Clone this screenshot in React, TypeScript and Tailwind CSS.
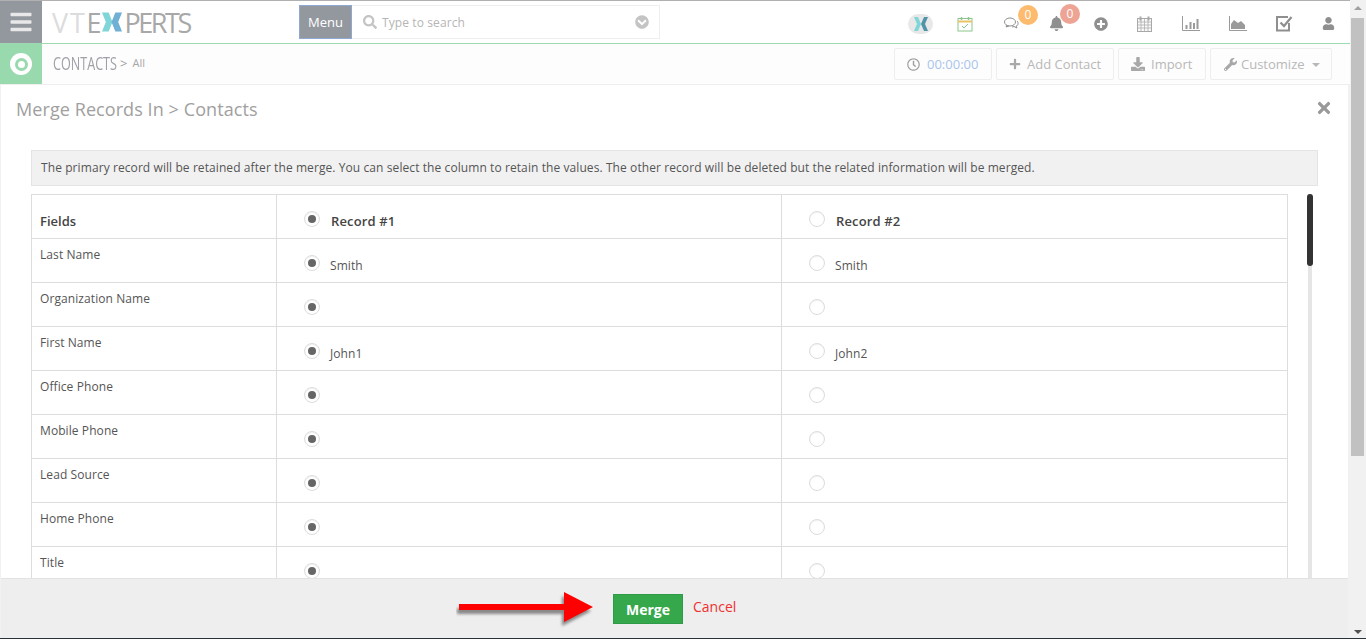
import React from 'react'
import {
  FaBars, FaTimes, FaPlus, FaWrench, FaBell, FaPlusCircle, FaUser, FaChevronCircleDown, FaSearch, FaDownload, FaRegClock,
} from 'react-icons/fa'

const rows = [
  { label: 'Last Name', a: 'Smith', b: 'Smith' },
  { label: 'Organization Name' },
  { label: 'First Name', a: 'John1', b: 'John2' },
  { label: 'Office Phone' },
  { label: 'Mobile Phone' },
  { label: 'Lead Source' },
  { label: 'Home Phone' },
  { label: 'Title' },
]

function Radio({ on }: { on?: boolean }) {
  return (
    <span className="flex h-[16px] w-[16px] shrink-0 items-center justify-center rounded-full border border-[#dcdcdc] bg-white shadow-[inset_0_1px_1px_rgba(0,0,0,0.06)]">
      {on && <span className="h-[8px] w-[8px] rounded-full bg-[#666666]" />}
    </span>
  )
}

function Cell({ on, text, bold, last }: { on?: boolean; text?: string; bold?: boolean; last?: boolean }) {
  return (
    <div className={`flex h-full pl-[27px] ${last ? 'w-[505px]' : 'w-[505px] border-r border-[#dddddd]'}`}>
      <div className={`flex items-start pt-[16px] ${bold ? 'gap-[11px]' : 'gap-[10px]'}`}>
        <Radio on={on} />
        {text && (
          <span className={`mt-[2px] leading-[17px] ${bold ? 'text-[13px] font-semibold tracking-[0.15px] text-[#444444]' : 'text-[12px] tracking-[0.085px] text-[#555555]'}`}>
            {text}
          </span>
        )}
      </div>
    </div>
  )
}

function NavBadge({ color, right }: { color: string; right: string }) {
  return (
    <span className={`absolute -top-[12px] flex h-[20px] w-[20px] items-center justify-center rounded-full text-[12px] text-white ${color} ${right}`}>
      0
    </span>
  )
}

function Logo() {
  return (
    <div className="flex items-center pl-[10px] font-['Open_Sans',sans-serif] text-[27px] leading-none">
      <span className="tracking-[1.8px] text-[#dcdcdc]">VT</span>
      <span className="tracking-[1.8px] text-[#a8a8a8]">E</span>
      <svg width="22" height="20" viewBox="0 0 21 20" className="ml-[-1px] mr-[2px]">
        <path d="M0 0h7l4 10-4 10H0l4-10z" fill="#7fd5d8" />
        <path d="M21 0h-7l-4 10 4 10h7l-4-10z" fill="#6fb0d4" />
      </svg>
      <span className="tracking-[-2.4px] text-[#a8a8a8]">PERTS</span>
    </div>
  )
}

function TopIcons() {
  return (
    <div className="ml-auto flex items-center pt-[3px] text-[#8f8f8f]">
      <span className="flex h-[20px] w-[25px] items-center justify-center rounded-full bg-[#e8e8e8]">
        <svg width="14" height="14" viewBox="0 0 14 14">
          <path d="M0 0h4l3 7-3 7H0l3-7z" fill="#7fd5d8" />
          <path d="M14 0h-4L7 7l3 7h4l-3-7z" fill="#4f94a8" />
        </svg>
      </span>
      {/* calendar check */}
      <svg width="16" height="16" viewBox="0 0 16 16" className="ml-[24px]" fill="none">
        <rect x="1" y="2.5" width="14" height="12.5" stroke="#8cc68c" />
        <path d="M1 5.5h14" stroke="#e8c468" strokeWidth="2" />
        <path d="M4.5 1v3M11.5 1v3" stroke="#8cc68c" strokeWidth="1.5" />
        <path d="M5 10l2 2 4-4" stroke="#8cc68c" />
      </svg>
      {/* chat */}
      <span className="relative ml-[31px] flex">
        <svg width="15" height="13" viewBox="0 0 15 13" fill="none">
          <ellipse cx="6" cy="5" rx="5.5" ry="4" stroke="#8f8f8f" />
          <path d="M3 8l-1 2 3-1M13 4c2 2 1 5-1 5l1 2-3-1.500-2 .5" stroke="#8f8f8f" />
        </svg>
        <NavBadge color="bg-[#fdbb6f]" right="-right-[19px]" />
      </span>
      <span className="relative ml-[30px] flex">
        <FaBell className="h-[15px] w-[15px]" />
        <NavBadge color="bg-[#eea494]" right="-right-[16px]" />
      </span>
      <FaPlusCircle className="ml-[30px] h-[14px] w-[14px]" />
      {/* calendar */}
      <svg width="15" height="16" viewBox="0 0 15 16" className="ml-[29px]" fill="none" stroke="#a8a8a8">
        <rect x="0.5" y="2.500" width="14" height="13" fill="#f8f8f8" />
        <path d="M0.500 6h14M0.500 9h14M0.500 12h14M4 3v13M7.500 3v13M11 3v13" strokeWidth="0.7" />
        <path d="M3.500 0.500v4M11.500 0.500v4" strokeWidth="2" />
      </svg>
      {/* bar chart */}
      <svg width="18" height="15" viewBox="0 0 18 15" className="ml-[30px]" fill="none" stroke="#9a9a9a">
        <path d="M0.500 0v14.500H18" />
        <path d="M4.500 13V9M8.500 13V6M12 13V7M15.500 13V3" strokeWidth="2" />
      </svg>
      {/* area chart */}
      <svg width="18" height="15" viewBox="0 0 18 15" className="ml-[29px]">
        <path d="M0.500 0v14.500H18" fill="none" stroke="#9a9a9a" />
        <path d="M2 13V8l3-4 4 3 3-2 4 4v4z" fill="#9a9a9a" />
      </svg>
      {/* checkbox */}
      <svg width="17" height="17" viewBox="0 0 17 17" className="ml-[29px]" fill="none" stroke="#8f8f8f">
        <path d="M13 8v7.500H1V2h11" strokeWidth="2" />
        <path d="M4.500 7.500l3.500 3.500 7.500-9" strokeWidth="2.200" />
      </svg>
      <FaUser className="ml-[29px] mr-[15px] h-[13px] w-[13px]" />
    </div>
  )
}

export default function App() {
  return (
    <div className="flex h-[639px] w-[1366px] flex-col overflow-hidden bg-[#f1f1f1] font-['Open_Sans',sans-serif]">
      <div className="flex min-h-0 flex-1">
        <div className="flex w-[1350px] flex-col border-t border-[#b0b0b0]">
          {/* top bar */}
          <div className="flex h-[42px] shrink-0 items-center bg-white">
            <div className="flex h-full w-[42px] items-center justify-center bg-[#93989f]">
              <FaBars className="h-[24px] w-[24px] text-[#e8e8e8]" />
            </div>
            <div className="w-[148px] shrink-0">
              <Logo />
            </div>
            <div className="ml-[109px] flex h-[34px] items-center">
              <div className="flex h-full w-[53px] items-center justify-center border border-[#8fa9d4] bg-[#93989f] pt-[2px] text-[13px] text-white">
                Menu
              </div>
              <div className="flex h-full w-[308px] items-center border border-l-0 border-[#eeeeee] pl-[11px] pr-[10px]">
                <FaSearch className="h-[14px] w-[14px] text-[#c4c4c4]" />
                <span className="ml-[5px] pt-[2px] text-[12px] tracking-[0.1px] text-[#b5b5b5]">Type to search</span>
                <FaChevronCircleDown className="ml-auto h-[14px] w-[14px] text-[#c4c4c4]" />
              </div>
            </div>
            <TopIcons />
          </div>
          {/* breadcrumb row */}
          <div className="flex h-[41px] shrink-0 items-center border-t border-[#9ed9b3] bg-[#fdfdfd]">
            <div className="flex h-full w-[42px] items-center justify-center bg-[#98d9ae]">
              <span className="flex h-[22px] w-[22px] items-center justify-center rounded-full bg-white">
                <span className="flex h-[13px] w-[13px] items-center justify-center rounded-full bg-[#98d9ae]">
                  <span className="h-[7px] w-[7px] rounded-full bg-white" />
                </span>
              </span>
            </div>
            <span className="mb-[2px] ml-[11px] w-[61px] origin-left scale-x-[0.7] whitespace-nowrap text-[18px] font-medium text-[#a0a0a8]">CONTACTS</span>
            <span className="mb-[1px] ml-[6px] text-[13px] text-[#a0a0a0]">&gt;</span>
            <span className="mb-[1px] ml-[5px] text-[11px] text-[#a8a8a8]">All</span>
            <div className="ml-auto mr-[18px] flex gap-[4px] text-[13px] text-[#b8b8b8]">
              <div className="flex h-[32px] w-[98px] items-center gap-[7px] rounded-[2px] border border-[#eeeeee] pl-[12px]">
                <FaRegClock className="h-[13px] w-[13px] text-[#a0a0a0]" />
                <span className="pt-[2px] text-[#a9c4ec]">00:00:00</span>
              </div>
              <div className="flex h-[32px] w-[118px] items-center gap-[6px] rounded-[2px] border border-[#eeeeee] pl-[12px]">
                <FaPlus className="h-[12px] w-[12px] text-[#a8a8a8]" />
                <span className="pt-[2px]">Add Contact</span>
              </div>
              <div className="flex h-[32px] w-[88px] items-center gap-[6px] rounded-[2px] border border-[#eeeeee] pl-[12px]">
                <FaDownload className="h-[14px] w-[14px] text-[#a8a8a8]" />
                <span className="pt-[2px]">Import</span>
              </div>
              <div className="flex h-[32px] w-[122px] items-center rounded-[2px] border border-[#eeeeee] pl-[13px]">
                <FaWrench className="h-[13px] w-[13px] text-[#a8a8a8]" />
                <span className="ml-[4px] pt-[2px]">Customize</span>
                <span className="ml-[7px] mt-[2px] h-0 w-0 border-x-[4px] border-t-[4px] border-x-transparent border-t-[#b8b8b8]" />
              </div>
            </div>
          </div>
          {/* page body */}
          <div className="flex min-h-0 flex-1 flex-col border-t border-[#eeeeee] pl-px pr-[2px]">
            <div className="flex min-h-0 flex-1 flex-col overflow-hidden bg-white">
              <div className="flex h-[65px] shrink-0 items-start justify-between pl-[15px] pr-[15px] pt-[11px]">
                <h1 className="text-[18px] leading-[26px] tracking-[0.08px] text-[#a0a0a0]">Merge Records In &gt; Contacts</h1>
                <FaTimes className="mt-[3px] h-[18px] w-[18px] text-[#999999]" />
              </div>
              <div className="ml-[30px] flex h-[36px] w-[1287px] shrink-0 items-center border border-[#e4e4e4] bg-[#f1f1f1] pl-[9px] text-[12px] tracking-[0.085px] text-[#555555]">
                The primary record will be retained after the merge. You can select the column to retain the values. The other record will be deleted but the related information will be merged.
              </div>
              <div className="relative mt-[8px] min-h-0 flex-1 overflow-hidden">
                <div className="ml-[30px] w-[1257px] border-l border-r border-t border-[#dddddd]">
                  <div className="flex h-[44px] border-b border-[#dddddd]">
                    <div className="flex h-full w-[245px] shrink-0 border-r border-[#dddddd] pl-[8px] pt-[18px] text-[13px] font-semibold leading-[17px] text-[#444444]">
                      Fields
                    </div>
                    <Cell on text="Record #1" bold />
                    <Cell text="Record #2" bold last />
                  </div>
                  {rows.map(r => (
                    <div key={r.label} className="flex h-[44px] border-b border-[#dddddd]">
                      <div className="h-full w-[245px] shrink-0 border-r border-[#dddddd] pl-[8px] pt-[7px] text-[12px] leading-[17px] tracking-[0.085px] text-[#555555]">
                        {r.label}
                      </div>
                      <Cell on text={r.a} />
                      <Cell text={r.b} last />
                    </div>
                  ))}
                </div>
                {/* inner scrollbar */}
                <div className="absolute bottom-0 left-[1307px] top-0 w-[4px] bg-[#e5e5e5]" />
                <div className="absolute left-[1306px] top-0 h-[72px] w-[6px] rounded-[3px] bg-[#333333]" />
              </div>
            </div>
            {/* footer */}
            <div className="relative flex h-[60px] shrink-0 items-start border-t border-[#e2e2e2] bg-[#eeeeee] pl-[612px] pt-[15px]">
              <svg width="142" height="38" viewBox="0 0 142 38" className="absolute left-[455px] top-[13px]">
                <path d="M3 12h105V0l29 15-29 15V18H3z" fill="#666666" opacity="0.75" transform="translate(-2 4)" style={{ filter: 'blur(1.5px)' }} />
                <path d="M3 12h105V0l29 15-29 15V18H3z" fill="#ff0000" />
              </svg>
              <button className="flex h-[30px] w-[70px] items-center justify-center border border-[#2f9a47] bg-[#35a84c] text-[14px] font-bold text-white">
                Merge
              </button>
              <span className="ml-[10px] mt-[2px] text-[14px] text-[#f03030]">Cancel</span>
            </div>
          </div>
        </div>
        {/* window scrollbar */}
        <div className="flex w-[16px] flex-col items-center pb-[4px] pr-px pt-[6px]">
          <span className="h-0 w-0 border-x-[4px] border-b-[4px] border-x-transparent border-b-[#a0a0a0]" />
          <div className="mt-[8px] h-[438px] w-[13px] bg-[#c1c1c1]" />
          <span className="mt-auto h-0 w-0 border-x-[4px] border-t-[4px] border-x-transparent border-t-[#505050]" />
        </div>
      </div>
      <div className="h-px shrink-0 bg-[#2a3238]" />
    </div>
  )
}
